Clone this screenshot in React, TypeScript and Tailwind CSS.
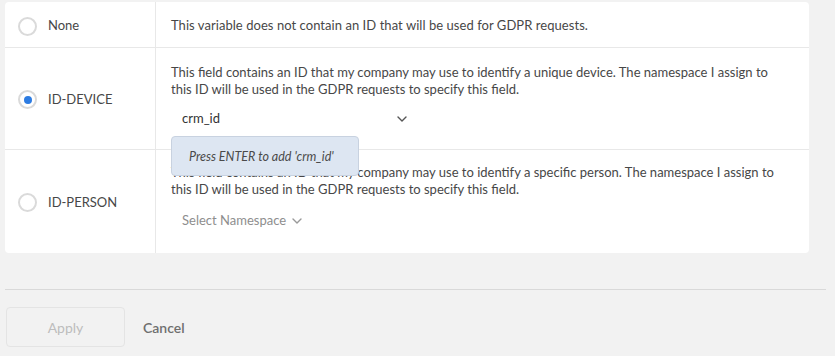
import React from "react";

function Radio({ checked }: { checked?: boolean }) {
  return (
    <span className="flex h-[19px] w-[19px] items-center justify-center rounded-full border-2 border-[#dadada] bg-white">
      {checked && <span className="h-[8px] w-[8px] rounded-full bg-[#2d7ce2]" />}
    </span>
  );
}

function Chevron({ className }: { className?: string }) {
  return (
    <svg className={className} width="10" height="6" viewBox="0 0 10 6" fill="none">
      <path d="M1 1l4 4 4-4" stroke="currentColor" strokeWidth="1.4" strokeLinecap="round" strokeLinejoin="round" />
    </svg>
  );
}

export default function App() {
  return (
    <div
      className="h-[356px] w-[835px] overflow-hidden bg-[#f2f2f2] text-[#474747]"
      style={{ fontFamily: "Lato, 'Open Sans', sans-serif" }}
    >
      <div className="pl-[5px] pt-[2px] w-[809px]">
        <div className="rounded-[4px] bg-white text-[13px]">
          {/* Row 1 */}
          <div className="flex h-[46px] border-b border-[#e8e8e8]">
            <div className="flex w-[151px] items-center gap-[11px] border-r border-[#e8e8e8] pl-[13px] pt-[3px]">
              <Radio />
              <span>None</span>
            </div>
            <div className="flex flex-1 items-center pl-[15px] pt-[3px] tracking-[0.05px]">
              This variable does not contain an ID that will be used for GDPR requests.
            </div>
          </div>
          {/* Row 2 */}
          <div className="flex h-[102px] border-b border-[#e8e8e8]">
            <div className="flex w-[151px] items-center gap-[11px] border-r border-[#e8e8e8] pl-[13px] pt-[2px]">
              <Radio checked />
              <span>ID-DEVICE</span>
            </div>
            <div className="relative flex-1 pl-[15px] pt-[16px] leading-[17px]">
              <p>
                This field contains an ID that my company may use to identify a unique device. The namespace I assign to
                <br />
                this ID will be used in the GDPR requests to specify this field.
              </p>
              <div className="mt-[12px] flex w-[236px] items-center justify-between pl-[11px]">
                <span className="text-[13px] text-[#333]">crm_id</span>
                <Chevron className="text-[#555]" />
              </div>
              <div className="absolute left-[15px] top-[88px] z-10 flex h-[40px] w-[188px] items-center rounded-[4px] border border-[#c8d2e0] bg-[#dde6f2] pl-[17px] text-[12.5px] italic text-[#4a4a4a]">
                Press ENTER to add 'crm_id'
              </div>
            </div>
          </div>
          {/* Row 3 */}
          <div className="flex h-[103px]">
            <div className="flex w-[151px] items-center gap-[11px] border-r border-[#e8e8e8] pl-[13px] pt-[2px]">
              <Radio />
              <span>ID-PERSON</span>
            </div>
            <div className="flex-1 pl-[15px] pt-[14px] leading-[17px]">
              <p>
                This field contains an ID that my company may use to identify a specific person. The namespace I assign to
                <br />
                this ID will be used in the GDPR requests to specify this field.
              </p>
              <div className="mt-[14px] flex items-center gap-[6px] pl-[11px] text-[13px] text-[#8e8e8e]">
                <span>Select Namespace</span>
                <Chevron className="text-[#999]" />
              </div>
            </div>
          </div>
        </div>
      </div>
      <div className="ml-[5px] mt-[36px] h-px w-[821px] bg-[#d9d9d9]" />
      <div className="ml-[6px] mt-[17px] flex items-center gap-[18px]">
        <button className="flex h-[40px] w-[119px] items-center justify-center rounded-[4px] border border-[#e4e4e4] bg-[#f2f2f2] text-[14px] text-[#bdbdbd]">
          Apply
        </button>
        <span className="text-[14px] font-semibold text-[#6f6f6f]">Cancel</span>
      </div>
    </div>
  );
}
